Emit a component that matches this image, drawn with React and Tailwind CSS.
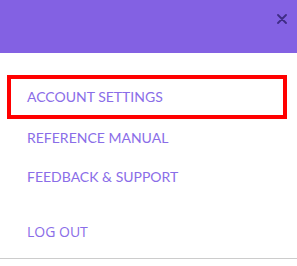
import React from "react";

export default function App() {
  const font = { fontFamily: "Lato, 'Noto Sans', sans-serif" };
  return (
    <div className="w-[297px] h-[266px] bg-white relative overflow-hidden" style={font}>
      <div className="h-[53px] bg-[#8361e3] flex justify-end items-start pt-[14px] pr-[10px]">
        <svg width="10" height="10" viewBox="0 0 10 10">
          <path d="M1 1 L9 9 M9 1 L1 9" stroke="#3f2c85" strokeWidth="1.8" strokeLinecap="round" />
        </svg>
      </div>
      <div className="pt-[22px]">
        <div className="ml-[7px] w-[280px] h-[44px] border-4 border-[#ff0000] flex items-center pl-[16px] pb-[2px]">
          <span className="text-[14px] text-[#8a6de8]">ACCOUNT SETTINGS</span>
        </div>
        <div className="h-[36px] flex items-center pl-[27px]">
          <span className="text-[14px] text-[#8a6de8]">REFERENCE MANUAL</span>
        </div>
        <div className="h-[42px] flex items-center pl-[27px]">
          <span className="text-[14px] text-[#8a6de8]">FEEDBACK &amp; SUPPORT</span>
        </div>
        <div className="h-[14px]" />
        <div className="h-[40px] flex items-center pl-[27px]">
          <span className="text-[14px] text-[#8a6de8]" style={{ fontFamily: "'Open Sans', sans-serif" }}>LOG OUT</span>
        </div>
      </div>
      <div className="absolute left-0 right-0 top-[258px] h-px bg-[#cccccc]" />
    </div>
  );
}
